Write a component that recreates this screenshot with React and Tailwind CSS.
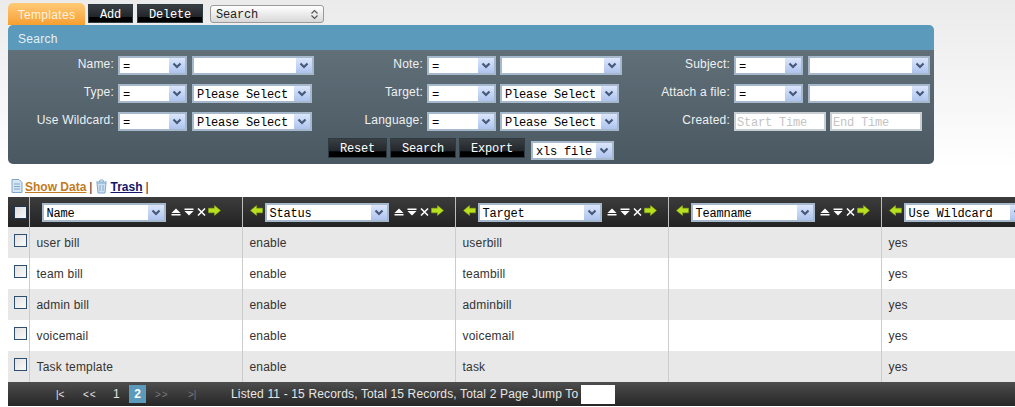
import React from 'react';

const mono = "font-['Liberation_Mono',monospace]";
const sans = "font-['Liberation_Sans',Arial,sans-serif]";

function Chevron() {
  return (
    <svg width="10" height="8" viewBox="0 0 10 8" fill="none">
      <path d="M1.5 1.5 L5 5 L8.5 1.5" stroke="#46597c" strokeWidth="2.2" />
    </svg>
  );
}

function Select({ value = '', className = 'w-[69px]' }) {
  return (
    <div className={`flex h-[19px] shrink-0 items-stretch overflow-hidden border-2 border-[#a5b8cc] bg-white ${className}`}>
      <span className={`flex-1 overflow-hidden whitespace-nowrap pl-[3px] text-left text-[12px] leading-[18px] tracking-[-0.2px] text-black ${mono}`}>{value}</span>
      <span className="flex w-[16px] shrink-0 items-center justify-center bg-gradient-to-b from-[#dce6fb] to-[#aec4ee]">
        <Chevron />
      </span>
    </div>
  );
}

function BlackButton({ children, className }) {
  return (
    <button className={`border border-[#2e3a42] bg-[linear-gradient(#3a3f44_0%,#22262a_68%,#000_70%,#000_100%)] text-center text-[12px] leading-[20px] tracking-[-0.2px] text-white ${mono} ${className}`}>
      {children}
    </button>
  );
}

function Field({ label, labelWidth, gap, children }) {
  return (
    <div className="flex items-start">
      <label style={{ width: labelWidth }} className={`pr-[4px] pt-[1px] text-right text-[12px] leading-[15px] tracking-[0.2px] text-[#eef1f3] ${sans}`}>{label}:</label>
      <div className="flex" style={{ gap }}>{children}</div>
    </div>
  );
}

function ArrowIcon({ flip }) {
  return (
    <svg width="13" height="11" viewBox="0 0 13 11" className={flip ? '-scale-x-100' : ''}>
      <path d="M0.5 3.2 H6.5 V0.5 L12.5 5.5 L6.5 10.5 V7.8 H0.5 Z" fill="#b9e01f" stroke="#8fb312" strokeWidth="0.5" />
    </svg>
  );
}

function SortIcons() {
  return (
    <div className="ml-[5px] flex items-center gap-[3px]">
      <svg width="10" height="8" viewBox="0 0 10 8"><path d="M5 0.5 L9.5 5 H0.5 Z" fill="#fff" /><rect x="0.5" y="6" width="9" height="1.5" fill="#fff" /></svg>
      <svg width="10" height="8" viewBox="0 0 10 8"><rect x="0.5" y="0.5" width="9" height="1.5" fill="#fff" /><path d="M5 7.5 L0.5 3 H9.5 Z" fill="#fff" /></svg>
      <svg width="9" height="8" viewBox="0 0 9 8"><path d="M1 0.5 L8 7.5 M8 0.5 L1 7.5" stroke="#fff" strokeWidth="1.5" /></svg>
    </div>
  );
}

function DocIcon() {
  return (
    <svg width="12" height="14" viewBox="0 0 12 14" fill="none">
      <path d="M1 0.5 H8 L11 3.5 V13.5 H1 Z" fill="#d5e6f4" stroke="#7fa6c6" />
      <path d="M3 5 H9 M3 7.5 H9 M3 10 H9" stroke="#7fa6c6" />
    </svg>
  );
}

function TrashIcon() {
  return (
    <svg width="13" height="15" viewBox="0 0 13 15" fill="none">
      <path d="M1 3 H12 M4.5 3 L5 1 H8 L8.5 3" stroke="#7fa9cc" />
      <path d="M2 4 H11 L10 14 H3 Z" fill="#cfe2f2" stroke="#7fa9cc" />
      <path d="M5 6 V12 M8 6 V12" stroke="#7fa9cc" />
    </svg>
  );
}

function Checkbox() {
  return <span className="block h-[13px] w-[13px] border border-[#2f4f6f] bg-gradient-to-br from-[#e2e2e2] to-[#fafafa]" />;
}

const rows = [
  ['user bill', 'enable', 'userbill', '', 'yes'],
  ['team bill', 'enable', 'teambill', '', 'yes'],
  ['admin bill', 'enable', 'adminbill', '', 'yes'],
  ['voicemail', 'enable', 'voicemail', '', 'yes'],
  ['Task template', 'enable', 'task', '', 'yes'],
];

const columns = ['Name', 'Status', 'Target', 'Teamname', 'Use Wildcard'];

export default function App() {
  return (
    <div className={`h-[407px] w-[1015px] overflow-hidden bg-white ${sans}`}>
      <div className="h-[170px] bg-gradient-to-b from-[#ebebeb] to-white pl-[8px] pt-[3px]">
        <div className="flex h-[22px] items-start">
          <div className="flex h-[22px] w-[77px] items-center justify-center rounded-t-[5px] bg-gradient-to-b from-[#ffcb78] to-[#f69f2c] pt-[2px] text-[12px] tracking-[0.3px] text-[#fff3df]">Templates</div>
          <BlackButton className="ml-[3px] mt-[1px] h-[19px] w-[45px]">Add</BlackButton>
          <BlackButton className="ml-[4px] mt-[1px] h-[19px] w-[66px]">Delete</BlackButton>
          <div className="ml-[7px] mt-[2px] flex h-[18px] w-[114px] items-center justify-between rounded-[3px] border border-[#9a9a9a] bg-gradient-to-b from-white to-[#d8d8d8] pl-[5px] pr-[4px]">
            <span className={`pt-[2px] text-[12px] tracking-[-0.2px] text-[#222] ${mono}`}>Search</span>
            <svg width="9" height="11" viewBox="0 0 9 11" fill="none">
              <path d="M1.5 4.5 L4.5 1.5 L7.5 4.5 M1.5 6.5 L4.5 9.5 L7.5 6.5" stroke="#555" strokeWidth="1.2" />
            </svg>
          </div>
        </div>

        <div className="w-[926px] overflow-hidden rounded-[5px]">
          <div className="flex h-[25px] items-center bg-[#5b9aba] pl-[10px] pt-[2px] text-[12px] tracking-[0.3px] text-[#e6f1f6]">Search</div>
          <div className="h-[114px] bg-gradient-to-b from-[#616f79] to-[#4a5862] pt-[6px]">
            <div className="grid grid-cols-[306px_308px_308px] gap-y-[9px]">
              <Field label="Name" labelWidth={110} gap={5}><Select value="=" /><Select className="w-[122px]" /></Field>
              <Field label="Note" labelWidth={113} gap={4}><Select value="=" /><Select className="w-[122px]" /></Field>
              <Field label="Subject" labelWidth={112} gap={5}><Select value="=" /><Select className="w-[122px]" /></Field>

              <Field label="Type" labelWidth={110} gap={5}><Select value="=" /><Select value="Please Select" className="w-[120px]" /></Field>
              <Field label="Target" labelWidth={113} gap={4}><Select value="=" /><Select value="Please Select" className="w-[119px]" /></Field>
              <Field label="Attach a file" labelWidth={112} gap={5}><Select value="=" /><Select className="w-[122px]" /></Field>

              <Field label="Use Wildcard" labelWidth={110} gap={5}><Select value="=" /><Select value="Please Select" className="w-[120px]" /></Field>
              <Field label="Language" labelWidth={113} gap={4}><Select value="=" /><Select value="Please Select" className="w-[119px]" /></Field>
              <Field label="Created" labelWidth={112} gap={4}>
                <input readOnly placeholder="Start Time" className={`h-[19px] w-[92px] border-2 border-[#c9ced3] bg-white pl-[1px] pt-[2px] text-[12px] tracking-[-0.2px] placeholder:text-[#c4c4c4] ${mono}`} />
                <input readOnly placeholder="End Time" className={`h-[19px] w-[92px] border-2 border-[#c9ced3] bg-white pl-[1px] pt-[2px] text-[12px] tracking-[-0.2px] placeholder:text-[#c4c4c4] ${mono}`} />
              </Field>
            </div>
            <div className="mt-[7px] flex items-start justify-center">
              <BlackButton className="h-[20px] w-[59px]">Reset</BlackButton>
              <BlackButton className="ml-[3px] h-[20px] w-[66px]">Search</BlackButton>
              <BlackButton className="ml-[3px] h-[20px] w-[66px]">Export</BlackButton>
              <Select value="xls file" className="ml-[6px] mt-[3px] w-[83px]" />
            </div>
          </div>
        </div>
      </div>

      <div className="flex h-[27px] items-start pl-[11px] pt-[9px] text-[12px] leading-[16px] text-[#222]">
        <DocIcon />
        <a className="ml-[2px] font-bold text-[#c27a1f] underline">Show Data</a>
        <span className="ml-[3px]">|</span>
        <span className="ml-[3px]"><TrashIcon /></span>
        <a className="ml-[2px] font-bold text-[#14146b] underline">Trash</a>
        <span className="ml-[3px]">|</span>
      </div>

      <div className="pl-[8px]">
        <table className="w-[1086px] table-fixed border-collapse text-[12px] text-[#333]">
          <colgroup>
            <col className="w-[21px]" />
            <col className="w-[213px]" />
            <col className="w-[213px]" />
            <col className="w-[213px]" />
            <col className="w-[213px]" />
            <col className="w-[213px]" />
          </colgroup>
          <thead>
            <tr className="h-[30px] bg-gradient-to-b from-[#3c3c3c] to-[#232323]">
              <th className="border-r border-[#bdbdbd] p-0">
                <span className="ml-[6px] block h-[13px] w-[13px] border border-[#1e3650] bg-gradient-to-br from-[#dcdcdc] to-[#f8f8f8]" />
              </th>
              {columns.map((name, i) => (
                <th key={name} className="border-r border-[#bdbdbd] p-0 align-top font-normal">
                  <div className={`flex items-start pt-[1px] ${i === 0 ? 'pl-[12px]' : 'pl-[7px]'}`}>
                    {i > 0 && <span className="mr-[2px] mt-[7px] block h-[11px]"><ArrowIcon flip /></span>}
                    <Select value={name} className="mt-[5px] w-[124px]" />
                    <div className="mt-[10px]"><SortIcons /></div>
                    <span className="ml-[2px] mt-[7px] block h-[11px]"><ArrowIcon /></span>
                  </div>
                </th>
              ))}
            </tr>
          </thead>
          <tbody>
            {rows.map((row, i) => (
              <tr key={row[0]} className={`h-[31px] ${i % 2 === 0 ? 'bg-[#e8e8e8]' : 'bg-white'}`}>
                <td className="border-r border-[#cccccc] p-0 align-top">
                  <div className="ml-[6px] mt-[7px]"><Checkbox /></div>
                </td>
                {row.map((cell, j) => (
                  <td key={j} className="border-r border-[#cccccc] p-0 pl-[7px] tracking-[0.2px]">{cell}</td>
                ))}
              </tr>
            ))}
          </tbody>
        </table>

        <div className="flex h-[24px] items-center bg-gradient-to-b from-[#4e4e4e] to-[#262626] text-[12px] text-[#e6e6e6]">
          <span className="ml-[48px] w-[27px] text-[10px]">|&lt;</span>
          <span className="w-[30px] text-[10px] tracking-[1px]">&lt;&lt;</span>
          <span className="w-[16px]">1</span>
          <span className="flex h-[18px] w-[17px] items-center justify-center bg-[#5b9aba] font-bold text-white">2</span>
          <span className="ml-[9px] w-[33px] text-[10px] tracking-[1px] text-[#777]">&gt;&gt;</span>
          <span className="w-[43px] text-[10px] text-[#777]">&gt;|</span>
          <span className="tracking-[0.15px]">Listed 11 - 15 Records, Total 15 Records, Total 2 Page Jump To</span>
          <input readOnly className="ml-[3px] h-[19px] w-[34px] bg-white" />
        </div>
      </div>
    </div>
  );
}
